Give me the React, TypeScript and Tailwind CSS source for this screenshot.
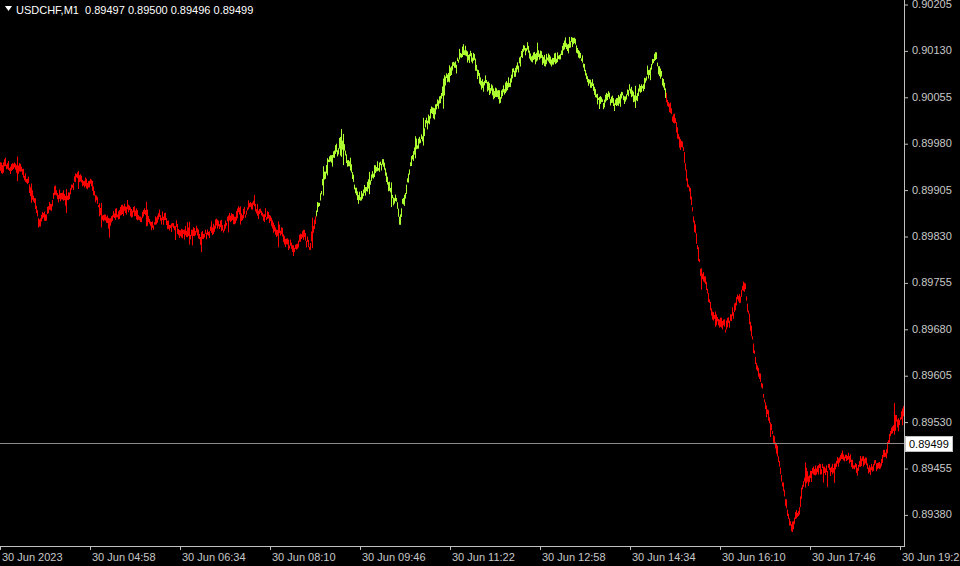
const keys: [number, number][] = [
  [0, 165], [28, 170], [38, 225], [55, 195], [90, 185], [100, 215], [140, 210], [190, 235], [240, 215],
  [275, 225], [310, 248], [325, 165], [340, 140], [360, 195], [382, 160], [400, 222], [416, 140],
  [440, 100], [462, 45], [480, 72], [500, 90], [520, 58], [540, 42], [560, 58], [572, 35], [590, 72],
  [612, 105], [640, 97], [655, 55], [665, 100], [682, 150], [700, 268], [725, 330], [745, 292],
  [756, 372], [775, 440], [792, 530], [806, 480], [822, 462], [850, 462], [880, 466], [895, 410], [904, 415],
];

function buildBars() {
  let s = 12345;
  const rnd = () => {
    s = (s * 1103515245 + 12345) & 0x7fffffff;
    return s / 0x7fffffff;
  };
  const red: string[] = [];
  const green: string[] = [];
  let drift = 0;
  for (let x = 0; x < 904; x++) {
    let i = 0;
    while (i < keys.length - 2 && keys[i + 1][0] <= x) i++;
    const [x0, y0] = keys[i];
    const [x1, y1] = keys[i + 1];
    const base = y0 + ((y1 - y0) * (x - x0)) / Math.max(1, x1 - x0);
    drift = drift * 0.9 + (rnd() - 0.5) * 9;
    const c = base + drift;
    const spike = rnd() < 0.08 ? rnd() * 12 : 0;
    const top = c - 1 - rnd() * 5 - (rnd() < 0.5 ? spike : 0);
    const bot = c + 1 + rnd() * 5 + spike;
    const seg = `M${x + 0.5} ${top.toFixed(1)}V${bot.toFixed(1)}`;
    if (x >= 316 && x < 666) green.push(seg);
    else red.push(seg);
  }
  return { red: red.join(''), green: green.join('') };
}

const prices = ['0.90205', '0.90130', '0.90055', '0.89980', '0.89905', '0.89830', '0.89755', '0.89680', '0.89605', '0.89530', '0.89455', '0.89380'];
const times = ['30 Jun 2023', '30 Jun 04:58', '30 Jun 06:34', '30 Jun 08:10', '30 Jun 09:46', '30 Jun 11:22', '30 Jun 12:58', '30 Jun 14:34', '30 Jun 16:10', '30 Jun 17:46', '30 Jun 19:22'];

export default function App() {
  const { red, green } = buildBars();
  return (
    <div className="relative w-[960px] h-[566px] bg-black overflow-hidden text-[11px] text-[#c8c8c8]" style={{ fontFamily: '"Liberation Sans", Arial, sans-serif' }}>
      <svg className="absolute left-0 top-0" width="960" height="566">
        <path d={red} stroke="#ff0000" strokeWidth="1" fill="none" />
        <path d={green} stroke="#adff2f" strokeWidth="1" fill="none" />
        <line x1="0" y1="443.5" x2="904" y2="443.5" stroke="#8a8a8a" />
        <line x1="904.5" y1="0" x2="904.5" y2="546" stroke="#c0c0c0" />
        <line x1="0" y1="546.5" x2="905" y2="546.5" stroke="#c0c0c0" />
        {prices.map((_, i) => (
          <line key={i} x1="904" y1={5 + i * 46.4} x2="908" y2={5 + i * 46.4} stroke="#c0c0c0" />
        ))}
        {times.map((_, i) => (
          <line key={i} x1={i * 90 + 0.5} y1="546" x2={i * 90 + 0.5} y2="550" stroke="#c0c0c0" />
        ))}
        <path d="M5 6h7l-3.5 5z" fill="#ffffff" />
      </svg>
      <div className="absolute left-[16px] top-[2px] text-white whitespace-nowrap">USDCHF,M1&nbsp; 0.89497 0.89500 0.89496 0.89499</div>
      {prices.map((p, i) => (
        <div key={p} className="absolute left-[912px] leading-none" style={{ top: 5 + i * 46.4 - 6 }}>{p}</div>
      ))}
      <div className="absolute left-[905px] top-[436px] bg-white text-black px-[3px] leading-[14px] border border-[#c0c0c0]">0.89499</div>
      {times.map((t, i) => (
        <div key={t} className="absolute top-[549px] whitespace-nowrap" style={{ left: i * 90 + 2 }}>{t}</div>
      ))}
    </div>
  );
}
